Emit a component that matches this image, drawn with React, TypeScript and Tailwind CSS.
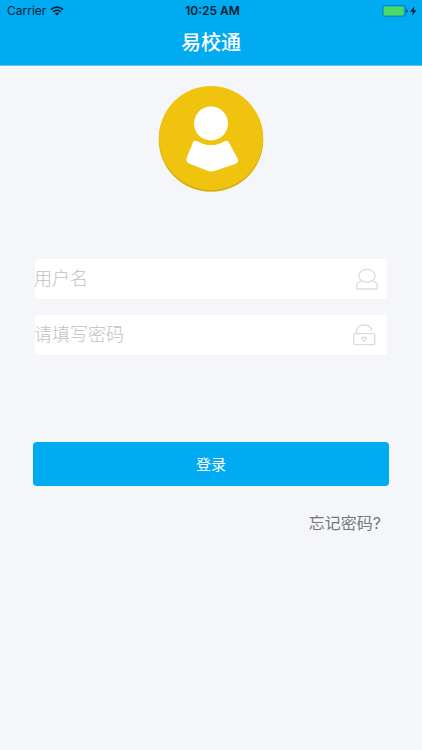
import React, { useState } from "react";

const StatusBar: React.FC = () => {
  return (
    <div className="grid grid-cols-3 items-center h-[22px] pl-[7px] pr-1 text-xs text-[#04202e]">
      <div className="flex items-center gap-1">
        <span>Carrier</span>
        <svg className="w-[14px] h-[10px]" viewBox="0 0 14 10" fill="none" stroke="currentColor" strokeWidth="1.7">
          <path d="M1 3.6C4.4 .4 9.6 .4 13 3.6" />
          <path d="M3.2 5.9C5.4 3.9 8.6 3.9 10.8 5.9" />
          <path d="M7 9.6L4.8 7.4C6.1 6.3 7.9 6.3 9.2 7.4Z" fill="currentColor" stroke="none" />
        </svg>
      </div>
      <span className="text-center font-semibold whitespace-nowrap">10:25 AM</span>
      <svg className="justify-self-end w-[36px] h-[12px]" viewBox="0 0 36 12">
        <rect x=".9" y=".9" width="22.6" height="10.2" rx="1.6" fill="none" stroke="#087aa8" strokeWidth="1" />
        <rect x="1.6" y="1.6" width="20" height="8.8" rx=".8" fill="#4cd964" />
        <path d="M24.4 4.2C26.2 4.6 26.2 7.4 24.4 7.8Z" fill="#04303f" />
        <path d="M32.4 1.2L28.2 6.8H30.9L30 10.9L34.4 5.2H31.7Z" fill="#04202e" />
      </svg>
    </div>
  );
};

const Avatar: React.FC = () => {
  return (
    <svg className="w-[106px] h-[106px]" viewBox="0 0 106 106" role="img" aria-label="头像">
      <circle cx="53" cy="53.5" r="52.3" fill="#d5ae12" />
      <circle cx="53" cy="52" r="52" fill="#f0c30f" />
      <circle cx="53" cy="37.4" r="17" fill="#fff" />
      <path
        d="M35.4 55.5Q37.2 54 39.6 55.2Q53 63 66.4 55.2Q68.8 54 70.6 56L79.6 72.5Q81.2 76 77.8 77.8L58 84.6Q53.5 86.4 49.5 84.8L31 77.6Q27.4 75.8 28.8 71.5Z"
        fill="#fff"
      />
    </svg>
  );
};

const UserIcon: React.FC = () => {
  return (
    <svg className="w-6 h-6 shrink-0" viewBox="0 0 24 24" fill="none" stroke="#dcdcde" strokeWidth="1.3">
      <ellipse cx="12" cy="8.7" rx="8.2" ry="6.4" />
      <path d="M6.9 13.8C4.1 14.6 1.7 16 1.7 18.5V22H22.1V18.5C22.1 16 19.9 14.6 17.1 13.8" strokeLinejoin="round" />
    </svg>
  );
};

const LockIcon: React.FC = () => {
  return (
    <svg className="w-6 h-6 shrink-0" viewBox="0 0 24 24" fill="none" stroke="#dcdcde" strokeWidth="1.3">
      <rect x="1.7" y="10.7" width="21" height="11" rx="1.2" />
      <path d="M4.7 10.5V8.6C4.7 4.6 7.6 2 12 2C16.4 2 19.2 4.3 19.5 7.6" />
      <path d="M12.2 18.2C10.6 17.4 9.7 16.5 9.9 15.4C10.1 14.1 11.7 13.9 12.2 14.9C12.7 13.9 14.5 14.1 14.6 15.4C14.7 16.5 13.8 17.4 12.2 18.2Z" />
    </svg>
  );
};

const inputClass =
  "flex-1 min-w-0 -ml-px bg-transparent text-lg font-light text-gray-700 placeholder-[#c0c1c5] focus:outline-none";

const App: React.FC = () => {
  const [username, setUsername] = useState("");
  const [password, setPassword] = useState("");

  const handleSubmit = (e: React.FormEvent) => {
    e.preventDefault();
  };

  return (
    <div className="min-h-screen bg-[#f4f6fa] font-['Inter','Noto_Sans_CJK_SC',sans-serif]">
      <header className="bg-[#00abf1] border-b border-[#62bfe8]">
        <StatusBar />
        <h1 className="h-[43px] pt-[5px] text-center text-xl leading-8 font-medium text-white">易校通</h1>
      </header>

      <main className="flex flex-col items-center pt-5">
        <Avatar />

        <form onSubmit={handleSubmit} className="w-full px-[33px] pt-[67px]">
          <div className="flex flex-col gap-4 px-0.5">
            <div className="flex items-center h-10 pr-2 rounded-sm bg-white">
              <input
                type="text"
                aria-label="用户名"
                value={username}
                onChange={(e) => setUsername(e.target.value)}
                placeholder="用户名"
                className={inputClass}
              />
              <UserIcon />
            </div>
            <div className="flex items-center h-10 pr-[11px] rounded-sm bg-white">
              <input
                type="password"
                aria-label="密码"
                value={password}
                onChange={(e) => setPassword(e.target.value)}
                placeholder="请填写密码"
                className={inputClass}
              />
              <LockIcon />
            </div>
          </div>

          <button
            type="submit"
            className="w-full h-11 mt-[87px] pt-0.5 rounded bg-[#00abf1] text-[15px] text-white"
          >
            登录
          </button>

          <div className="flex justify-end pt-[25px] pr-2">
            <a href="#" className="text-base leading-6 text-[#75767a]">
              忘记密码?
            </a>
          </div>
        </form>
      </main>
    </div>
  );
};

export default App;
